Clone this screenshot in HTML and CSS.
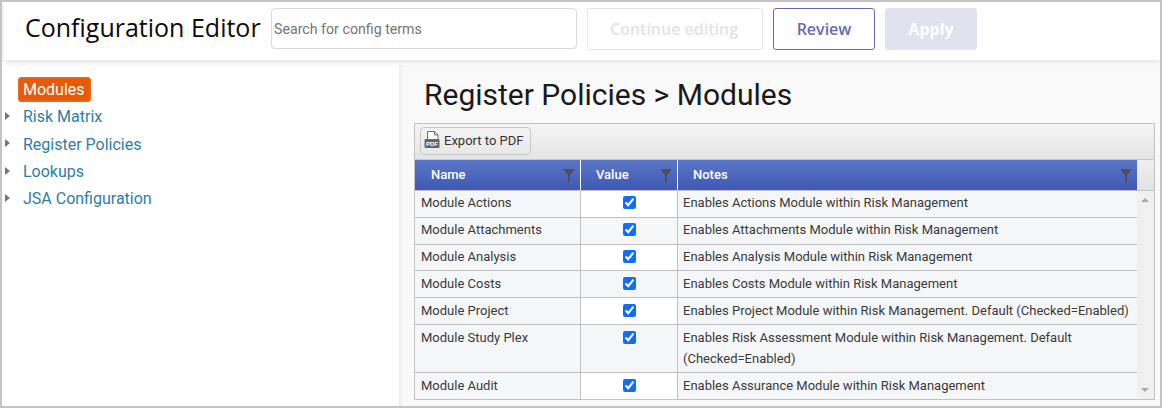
FILE: index.html
```html
<!DOCTYPE html>
<html lang="en">
<head>
<meta charset="utf-8">
<title>Configuration Editor</title>
<link rel="stylesheet" href="styles.css">
</head>
<body>
<div class="frame">
  <header class="topbar">
    <h1 class="app-title">Configuration Editor</h1>
    <input class="search" type="text" placeholder="Search for config terms">
    <button class="btn btn-ghost" type="button">Continue editing</button>
    <button class="btn btn-review" type="button">Review</button>
    <button class="btn btn-apply" type="button">Apply</button>
  </header>
  <div class="body">
    <nav class="tree">
      <div class="tree-row tree-selected"><span class="pill">Modules</span></div>
      <div class="tree-row"><span class="arrow"></span><a class="tree-link">Risk Matrix</a></div>
      <div class="tree-row"><span class="arrow"></span><a class="tree-link">Register Policies</a></div>
      <div class="tree-row"><span class="arrow"></span><a class="tree-link">Lookups</a></div>
      <div class="tree-row"><span class="arrow"></span><a class="tree-link">JSA Configuration</a></div>
    </nav>
    <main class="content">
      <h2 class="page-title">Register Policies &gt; Modules</h2>
      <section class="grid">
        <div class="toolbar">
          <button class="export" type="button">
            <svg class="pdf-icon" width="16" height="18" viewBox="0 0 16 18">
              <path d="M3.5 8V.5h7l3.5 3.5v4" fill="#fff" stroke="#707070"/>
              <path d="M10.5.5v3.5H14" fill="none" stroke="#707070"/>
              <rect x=".5" y="8" width="15" height="9" rx="1" fill="#666"/>
              <text class="pdf-label" x="8" y="15">PDF</text>
            </svg>
            <span class="export-label">Export to PDF</span>
          </button>
        </div>
        <div class="head-row">
          <div class="th th-name">Name<svg class="filter" viewBox="0 0 12 14"><path d="M0 0h12L7 6v7l-2 1V6z"/></svg></div>
          <div class="th th-value">Value<svg class="filter" viewBox="0 0 12 14"><path d="M0 0h12L7 6v7l-2 1V6z"/></svg></div>
          <div class="th th-notes">Notes<svg class="filter" viewBox="0 0 12 14"><path d="M0 0h12L7 6v7l-2 1V6z"/></svg></div>
          <div class="th-spacer"></div>
        </div>
        <div class="rows-wrap">
          <div class="rows">
            <div class="row row-alt"><div class="td c-name">Module Actions</div><div class="td c-value"><input type="checkbox" checked></div><div class="td c-notes">Enables Actions Module within Risk Management</div></div>
            <div class="row"><div class="td c-name">Module Attachments</div><div class="td c-value"><input type="checkbox" checked></div><div class="td c-notes">Enables Attachments Module within Risk Management</div></div>
            <div class="row row-alt row-tight"><div class="td c-name">Module Analysis</div><div class="td c-value"><input type="checkbox" checked></div><div class="td c-notes">Enables Analysis Module within Risk Management</div></div>
            <div class="row"><div class="td c-name">Module Costs</div><div class="td c-value"><input type="checkbox" checked></div><div class="td c-notes">Enables Costs Module within Risk Management</div></div>
            <div class="row row-alt"><div class="td c-name">Module Project</div><div class="td c-value"><input type="checkbox" checked></div><div class="td c-notes">Enables Project Module within Risk Management. Default (Checked=Enabled)</div></div>
            <div class="row"><div class="td c-name">Module Study Plex</div><div class="td c-value"><input type="checkbox" checked></div><div class="td c-notes">Enables Risk Assessment Module within Risk Management. Default (Checked=Enabled)</div></div>
            <div class="row row-alt row-last"><div class="td c-name">Module Audit</div><div class="td c-value"><input type="checkbox" checked></div><div class="td c-notes">Enables Assurance Module within Risk Management</div></div>
          </div>
          <div class="scrollbar"><span class="up"></span><span class="down"></span></div>
        </div>
      </section>
    </main>
  </div>
</div>
</body>
</html>
```
FILE: styles.css
```css
* { box-sizing: border-box; }
html, body { margin: 0; padding: 0; height: 100%; }
body { font-family: Roboto, "Liberation Sans", sans-serif; background: #fff; overflow: hidden; }
.frame { width: 1162px; height: 408px; border: 2px solid #c4c4c4; display: flex; flex-direction: column; overflow: hidden; background: #fff; }
.topbar { height: 58px; flex: none; display: flex; align-items: flex-start; background: #fff; box-shadow: 0 2px 6px rgba(0,0,0,.14); position: relative; z-index: 2; margin-left: 2px; padding-top: 6px; }
.app-title { font-family: "Open Sans", sans-serif; font-weight: 400; font-size: 25px; line-height: 30px; margin: 4px 10px 0 21px; color: #0b0b0b; width: 236px; white-space: nowrap; }
.search { width: 306px; height: 41px; border: 1px solid #d8d8dc; border-radius: 4px; padding: 0 2px; font: 14.2px Roboto, sans-serif; margin-right: 10px; outline: none; }
.search::placeholder { color: #757575; opacity: 1; }
.btn { height: 42px; border-radius: 3px; font: 600 16px "Open Sans", sans-serif; background: #fff; padding: 0; }
.btn-ghost { width: 176px; border: 1px solid #e4e3f0; color: #e2e1ef; margin-right: 10px; padding-right: 2px; }
.btn-review { width: 102px; border: 1px solid #6a6ab4; color: #6a6ab4; margin-right: 10px; }
.btn-apply { width: 92px; border: 1px solid #e2e1ef; background: #e2e1ef; color: #fff; font-weight: 700; }
.body { flex: 1; display: flex; min-height: 0; padding-top: 5px; }
.tree { width: 397px; flex: none; padding: 12px 0 0 0; background: #fff; position: relative; z-index: 1; }
.tree-row { height: 27.4px; display: flex; align-items: center; font-size: 16px; position: relative; padding-left: 21px; }
.tree-selected { height: 25px; margin-bottom: 1px; padding-left: 16px; }
.pill { display: inline-block; height: 25px; line-height: 23px; padding: 0 5px 0 4px; background: #e8590a; color: #fff; border-radius: 3px; border: 1px solid #ea6a1f; box-shadow: inset 0 0 2px #f07a33; }
.arrow { position: absolute; left: 3px; top: 9px; border-left: 5px solid #7a7570; border-top: 4px solid transparent; border-bottom: 4px solid transparent; }
.tree-link { color: #2d7ea8; }
.content { flex: 1; min-width: 0; background: linear-gradient(90deg, #ebebeb, #f9f9f9 4px); padding: 0 0 0 15px; }
.page-title { font-weight: 400; font-size: 30px; line-height: 36px; margin: 12px 0 10px 10px; color: #1a1a1a; }
.grid { width: 741px; height: 277px; border: 1px solid #c2c2c2; display: flex; flex-direction: column; }
.toolbar { height: 36px; flex: none; padding: 3px 5px; background: linear-gradient(#f4f4f4, #e4e4e4); border-bottom: 1px solid #c8c8c8; }
.export { height: 28px; width: 111px; display: flex; align-items: center; gap: 4px; padding: 0 0 0 3px; border: 1px solid #c8c8c8; border-radius: 4px; background: linear-gradient(#f2f2f2, #e8e8e8); font: 13px Roboto, sans-serif; color: #333; }
.export-label { margin-bottom: 2px; }
.pdf-icon { flex: none; margin-bottom: 2px; }
.pdf-label { font: 700 6px "Liberation Sans", sans-serif; fill: #fff; text-anchor: middle; }
.head-row { height: 31px; flex: none; display: flex; background: linear-gradient(#5b76c7, #3f59b5); color: #fff; font-size: 13px; font-weight: 500; border-bottom: 1px solid #c2c2c2; }
.th { position: relative; display: flex; align-items: center; border-right: 1px solid #fff; height: 30px; padding-left: 15px; padding-bottom: 2px; }
.th-name { width: 166px; padding-left: 16px; }
.th-value { width: 97px; }
.th-notes { flex: 1; border-right: 0; }
.th-spacer { width: 17px; background: linear-gradient(#efefef, #e2e2e2); height: 30px; }
.filter { position: absolute; right: 5px; top: 9px; width: 12px; height: 14px; fill: #4d4f5c; }
.rows-wrap { flex: 1; display: flex; min-height: 0; overflow: hidden; }
.rows { flex: 1; min-width: 0; }
.row { display: flex; border-bottom: 1px solid #c0c0c0; background: #f5f6f8; }
.row-last { border-bottom: 0; }
.td { font-size: 13px; line-height: 21px; color: #3a3a3a; padding: 1px 5px 4px 6px; border-right: 1px solid #c0c0c0; }
.row-tight .td { padding-bottom: 3px; }
.row-tight ~ .row .td { padding-top: 2px; padding-bottom: 3px; }
.c-name { width: 166px; flex: none; }
.c-value { width: 97px; flex: none; display: flex; justify-content: center; padding-top: 5px; }
.row-tight ~ .row .c-value { padding-top: 6px; }
.c-value input { margin: 0; width: 13px; height: 13px; accent-color: #0d6efd; }
.row-alt .c-value { background: #fff; }
.c-notes { flex: 1; border-right: 0; padding-left: 5px; }
.scrollbar { width: 17px; flex: none; background: #f0f0f0; position: relative; }
.up, .down { position: absolute; left: 4px; border-left: 4px solid transparent; border-right: 4px solid transparent; }
.up { top: 7px; border-bottom: 4px solid #a8a8a8; }
.down { bottom: 7px; border-top: 4px solid #a8a8a8; }
```
